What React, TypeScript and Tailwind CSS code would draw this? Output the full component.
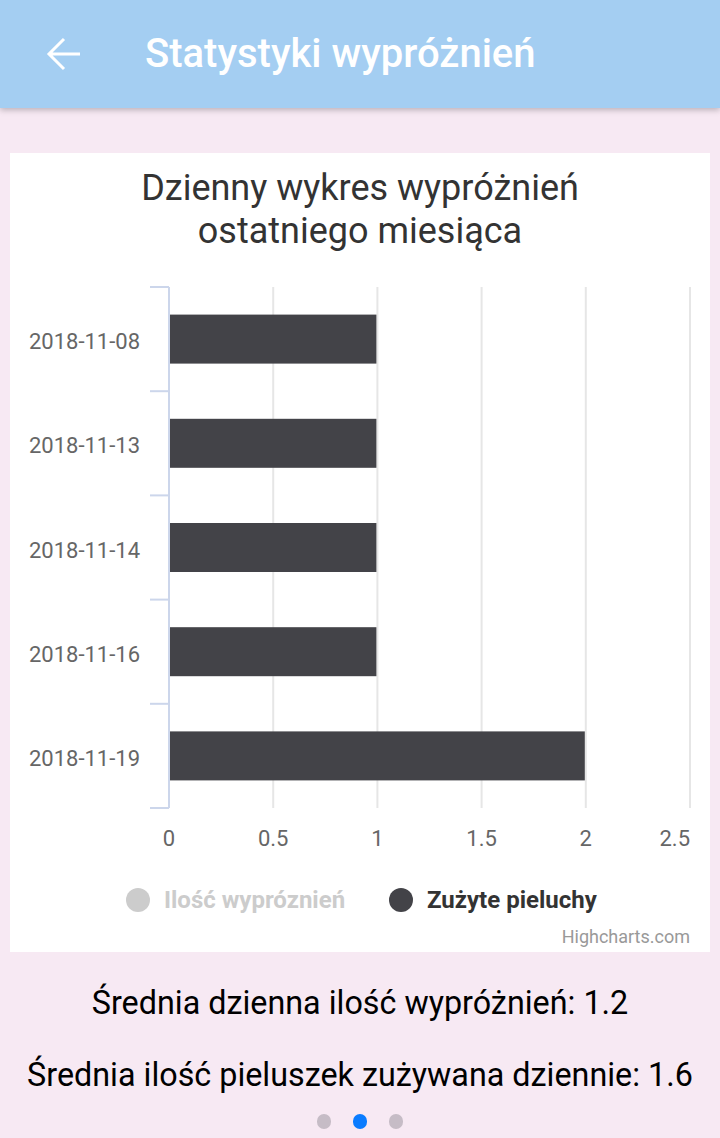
const days = [
  { label: "2018-11-08", value: 1 },
  { label: "2018-11-13", value: 1 },
  { label: "2018-11-14", value: 1 },
  { label: "2018-11-16", value: 1 },
  { label: "2018-11-19", value: 2 },
]

const X0 = 159
const PER_UNIT = 208.4
const TOP = 134
const BOTTOM = 655
const ROW = (BOTTOM - TOP) / days.length
const ticks = [0, 0.5, 1, 1.5, 2, 2.5]

function Chart() {
  return (
    <svg
      viewBox="0 100 700 699"
      width={700}
      height={699}
      className="block"
      style={{ fontFamily: "Roboto, 'Liberation Sans', sans-serif" }}
    >
      {ticks.slice(1).map((t) => (
        <line
          key={t}
          x1={X0 + t * PER_UNIT}
          x2={X0 + t * PER_UNIT}
          y1={TOP}
          y2={BOTTOM}
          stroke="#e6e6e6"
          strokeWidth={2}
        />
      ))}
      {days.map((d, i) => {
        const cy = TOP + ROW * (i + 0.5)
        return (
          <g key={d.label}>
            <rect
              x={X0 + 1}
              y={cy - 24.5}
              width={d.value * PER_UNIT - 2}
              height={49}
              fill="#434348"
            />
            <text x={130} y={cy + 10} textAnchor="end" fontSize={22} fill="#666666">
              {d.label}
            </text>
          </g>
        )
      })}
      <line x1={X0} x2={X0} y1={TOP} y2={BOTTOM} stroke="#ccd6eb" strokeWidth={2} />
      {Array.from({ length: days.length + 1 }).map((_, i) => (
        <line
          key={i}
          x1={140}
          x2={X0}
          y1={TOP + ROW * i}
          y2={TOP + ROW * i}
          stroke="#ccd6eb"
          strokeWidth={2}
        />
      ))}
      {ticks.map((t, i) => {
        const last = i === ticks.length - 1
        return (
          <text
            key={t}
            x={last ? 680 : X0 + t * PER_UNIT}
            y={693}
            textAnchor={last ? "end" : "middle"}
            fontSize={22}
            fill="#666666"
          >
            {t}
          </text>
        )
      })}
      <circle cx={128} cy={747} r={12} fill="#cccccc" />
      <text x={154} y={755} fontSize={24} fontWeight={700} fill="#cccccc">
        Ilość wypróznień
      </text>
      <circle cx={391} cy={747} r={12} fill="#434348" />
      <text x={417} y={755} fontSize={24} fontWeight={700} fill="#333333">
        Zużyte pieluchy
      </text>
      <text x={680} y={790} textAnchor="end" fontSize={18} fill="#999999">
        Highcharts.com
      </text>
    </svg>
  )
}

export default function App() {
  return (
    <div
      className="flex h-[1138px] w-[720px] flex-col overflow-hidden bg-[#f7e9f3]"
      style={{ fontFamily: "Roboto, 'Liberation Sans', sans-serif" }}
    >
      <header className="relative z-10 flex h-[108px] shrink-0 items-center bg-[#a4cef2] shadow-[0_2px_6px_rgba(0,0,0,0.25)]">
        <svg width={48} height={48} viewBox="0 0 48 48" className="ml-10">
          <path d="M40 24H9M24 9L9 24l15 15" fill="none" stroke="white" strokeWidth={3} />
        </svg>
        <h1 className="ml-[57px] text-[40px] font-medium leading-none text-white">
          Statystyki wypróżnień
        </h1>
      </header>

      <main className="flex flex-col items-center">
        <section className="mt-[45px] w-[700px] bg-white">
          <h2 className="pt-[14px] text-center text-[36px] leading-[43px] text-[#333333]">
            Dzienny wykres wypróżnień
            <br />
            ostatniego miesiąca
          </h2>
          <Chart />
        </section>

        <p className="mt-[31px] text-[32.3px] leading-[40px] text-black">
          Średnia dzienna ilość wypróżnień: 1.2
        </p>
        <p className="mt-[32px] text-[32.3px] leading-[40px] text-black">
          Średnia ilość pieluszek zużywana dziennie: 1.6
        </p>

        <div className="mt-[19px] flex items-center gap-[22px]">
          <span className="h-[15px] w-[14px] rounded-full bg-[#c6bcc6]" />
          <span className="h-[15px] w-[14px] rounded-full bg-[#0a7cff]" />
          <span className="h-[15px] w-[14px] rounded-full bg-[#c6bcc6]" />
        </div>
      </main>
    </div>
  )
}
